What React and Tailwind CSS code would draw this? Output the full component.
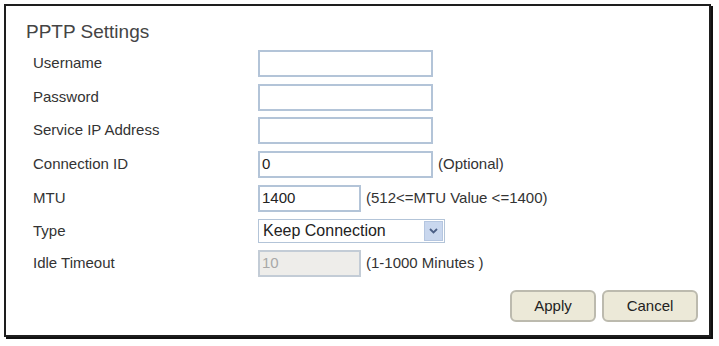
import React from "react";

const font = { fontFamily: '"Liberation Sans", Arial, sans-serif' };

function Row({ label, h, children }) {
  return (
    <div className={`flex items-start ${h}`}>
      <div className="w-[232px] h-[27px] flex items-center pl-[7px] text-[15px] text-[#333]">{label}</div>
      <div className="flex items-center h-[27px]">{children}</div>
    </div>
  );
}

function TextBox({ w, value = "", disabled = false }) {
  return (
    <div
      className={`${w} h-[27px] border-2 ${
        disabled ? "border-[#c3ccd6] bg-[#eeedea] text-[#a8a8a8]" : "border-[#b3c4d8] bg-white text-[#222]"
      } flex items-center pl-[2px] text-[15px]`}
    >
      {value}
    </div>
  );
}

export default function App() {
  return (
    <div className="w-[719px] h-[346px] bg-white p-[4px]" style={font}>
      <div className="w-[707px] h-[333px] border-2 border-[#1e1e1e] shadow-[2px_2px_0_#111] flex flex-col pt-[15px] pl-[20px] pr-[11px]">
        <div className="text-[19px] leading-[22px] text-[#444] mb-[7px]">PPTP Settings</div>
        <Row label="Username" h="h-[34px]">
          <TextBox w="w-[175px]" />
        </Row>
        <Row label="Password" h="h-[33px]">
          <TextBox w="w-[175px]" />
        </Row>
        <Row label="Service IP Address" h="h-[34px]">
          <TextBox w="w-[175px]" />
        </Row>
        <Row label="Connection ID" h="h-[34px]">
          <TextBox w="w-[175px]" value="0" />
          <span className="ml-[5px] text-[15px] text-[#333]">(Optional)</span>
        </Row>
        <Row label="MTU" h="h-[34px]">
          <TextBox w="w-[103px]" value="1400" />
          <span className="ml-[5px] text-[15px] text-[#333]">(512&lt;=MTU Value &lt;=1400)</span>
        </Row>
        <div className="flex items-start h-[31px]">
          <div className="w-[232px] h-[24px] flex items-center pl-[7px] text-[15px] text-[#333]">Type</div>
          <div className="w-[187px] h-[24px] border border-[#b3c4d8] bg-white flex items-center justify-between pl-[4px] pr-[1px] text-[16px] text-[#222]">
            <span>Keep Connection</span>
            <div className="w-[19px] h-[20px] bg-[#c9d7ee] border border-[#b5c6e0] flex items-center justify-center">
              <svg width="9" height="6" viewBox="0 0 9 6">
                <path d="M1 1 L4.5 4.5 L8 1" fill="none" stroke="#4b5f86" strokeWidth="1.8" />
              </svg>
            </div>
          </div>
        </div>
        <Row label="Idle Timeout" h="h-[27px]">
          <TextBox w="w-[103px]" value="10" disabled />
          <span className="ml-[5px] text-[15px] text-[#333]">(1-1000 Minutes )</span>
        </Row>
        <div className="flex justify-end gap-[6px] mt-[13px]">
          <button className="w-[86px] h-[32px] rounded-[6px] border-2 border-[#bcbaae] bg-[#ece9d8] text-[15px] text-[#222]">
            Apply
          </button>
          <button className="w-[96px] h-[32px] rounded-[6px] border-2 border-[#bcbaae] bg-[#ece9d8] text-[15px] text-[#222]">
            Cancel
          </button>
        </div>
      </div>
    </div>
  );
}
